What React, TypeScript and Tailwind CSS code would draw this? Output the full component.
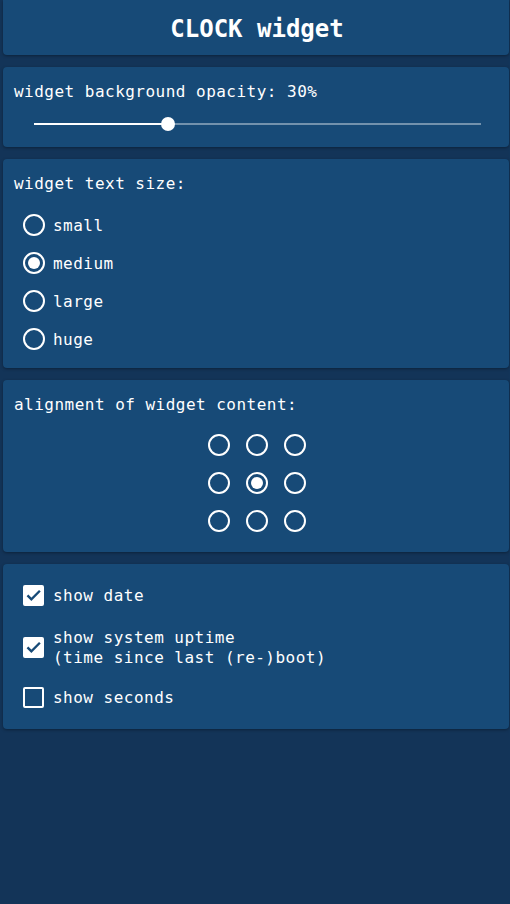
import { useState } from "react";

const font = "font-['DejaVu_Sans_Mono',monospace]";

function Card({ className, children }: { className?: string; children: React.ReactNode }) {
  return (
    <div
      className={`ml-[3px] mr-[1px] rounded-[4px] bg-[#174a77] shadow-[0_1px_3px_rgba(0,0,0,0.35)] ${className ?? ""}`}
    >
      {children}
    </div>
  );
}

function Radio({ checked }: { checked: boolean }) {
  return (
    <span className="flex h-[22px] w-[22px] shrink-0 items-center justify-center rounded-full border-2 border-white">
      {checked && <span className="h-[12px] w-[12px] rounded-full bg-white" />}
    </span>
  );
}

function Checkbox({ checked }: { checked: boolean }) {
  return (
    <span
      className={`flex h-[21px] w-[21px] shrink-0 items-center justify-center rounded-[2px] border-2 border-white ${
        checked ? "bg-white" : ""
      }`}
    >
      {checked && (
        <svg width="18" height="18" viewBox="0 0 24 24" fill="none">
          <path d="M3.5 12.5l5.5 5.5L21 6" stroke="#174a77" strokeWidth="3.4" />
        </svg>
      )}
    </span>
  );
}

export default function App() {
  const [opacity] = useState(30);
  const [size, setSize] = useState("medium");
  const [align, setAlign] = useState(4);
  const [showDate, setShowDate] = useState(true);
  const [showUptime, setShowUptime] = useState(true);
  const [showSeconds, setShowSeconds] = useState(false);

  return (
    <div className={`min-h-[904px] w-[510px] bg-[#133458] text-white ${font} text-[16px] leading-[20px] tracking-[0.48px]`}>
      <div className="flex flex-col gap-[12px]">
        {/* title */}
        <Card className="flex h-[55px] items-center justify-center rounded-t-none pt-[2px]">
          <h1 className="pl-[2px] text-[24px] font-bold tracking-normal">CLOCK widget</h1>
        </Card>

        {/* opacity */}
        <Card className="px-[11px] pb-[13px] pt-[15px]">
          <div>widget background opacity: {opacity}%</div>
          <div className="mt-[12px] flex h-[20px] items-center pl-[20px] pr-[17px]">
            <div className="relative h-[2px] w-full bg-white/40">
              <div className="absolute left-0 top-0 h-[2px] bg-white" style={{ width: `${opacity}%` }} />
              <div
                className="absolute top-[-6px] h-[14px] w-[14px] -translate-x-1/2 rounded-full bg-white"
                style={{ left: `${opacity}%` }}
              />
            </div>
          </div>
        </Card>

        {/* text size */}
        <Card className="px-[11px] pb-[10px] pt-[15px]">
          <div>widget text size:</div>
          <div className="mt-[12px] flex flex-col">
            {["small", "medium", "large", "huge"].map((s) => (
              <label
                key={s}
                onClick={() => setSize(s)}
                className="flex h-[38px] cursor-pointer items-center gap-[8px] pl-[9px]"
              >
                <Radio checked={size === s} />
                <span className="pt-[1px]">{s}</span>
              </label>
            ))}
          </div>
        </Card>

        {/* alignment */}
        <Card className="px-[11px] pb-[12px] pt-[15px]">
          <div>alignment of widget content:</div>
          <div className="mt-[11px] flex justify-center pl-[2px]">
            <div className="grid grid-cols-3">
              {Array.from({ length: 9 }).map((_, i) => (
                <button
                  key={i}
                  onClick={() => setAlign(i)}
                  className="flex h-[38px] w-[38px] items-center justify-center"
                >
                  <Radio checked={align === i} />
                </button>
              ))}
            </div>
          </div>
        </Card>

        {/* toggles */}
        <Card className="px-[11px] pb-[8px] pt-[7px]">
          <label
            onClick={() => setShowDate(!showDate)}
            className="flex h-[48px] cursor-pointer items-center gap-[9px] pl-[9px]"
          >
            <Checkbox checked={showDate} />
            <span className="pt-[2px]">show date</span>
          </label>
          <label
            onClick={() => setShowUptime(!showUptime)}
            className="flex cursor-pointer items-center gap-[9px] pb-[5px] pl-[9px] pt-[7px]"
          >
            <Checkbox checked={showUptime} />
            <span className="pt-[2px]">
              show system uptime
              <br />
              (time since last (re-)boot)
            </span>
          </label>
          <label
            onClick={() => setShowSeconds(!showSeconds)}
            className="flex h-[48px] cursor-pointer items-center gap-[9px] pl-[9px]"
          >
            <Checkbox checked={showSeconds} />
            <span className="pt-[2px]">show seconds</span>
          </label>
        </Card>
      </div>
    </div>
  );
}
